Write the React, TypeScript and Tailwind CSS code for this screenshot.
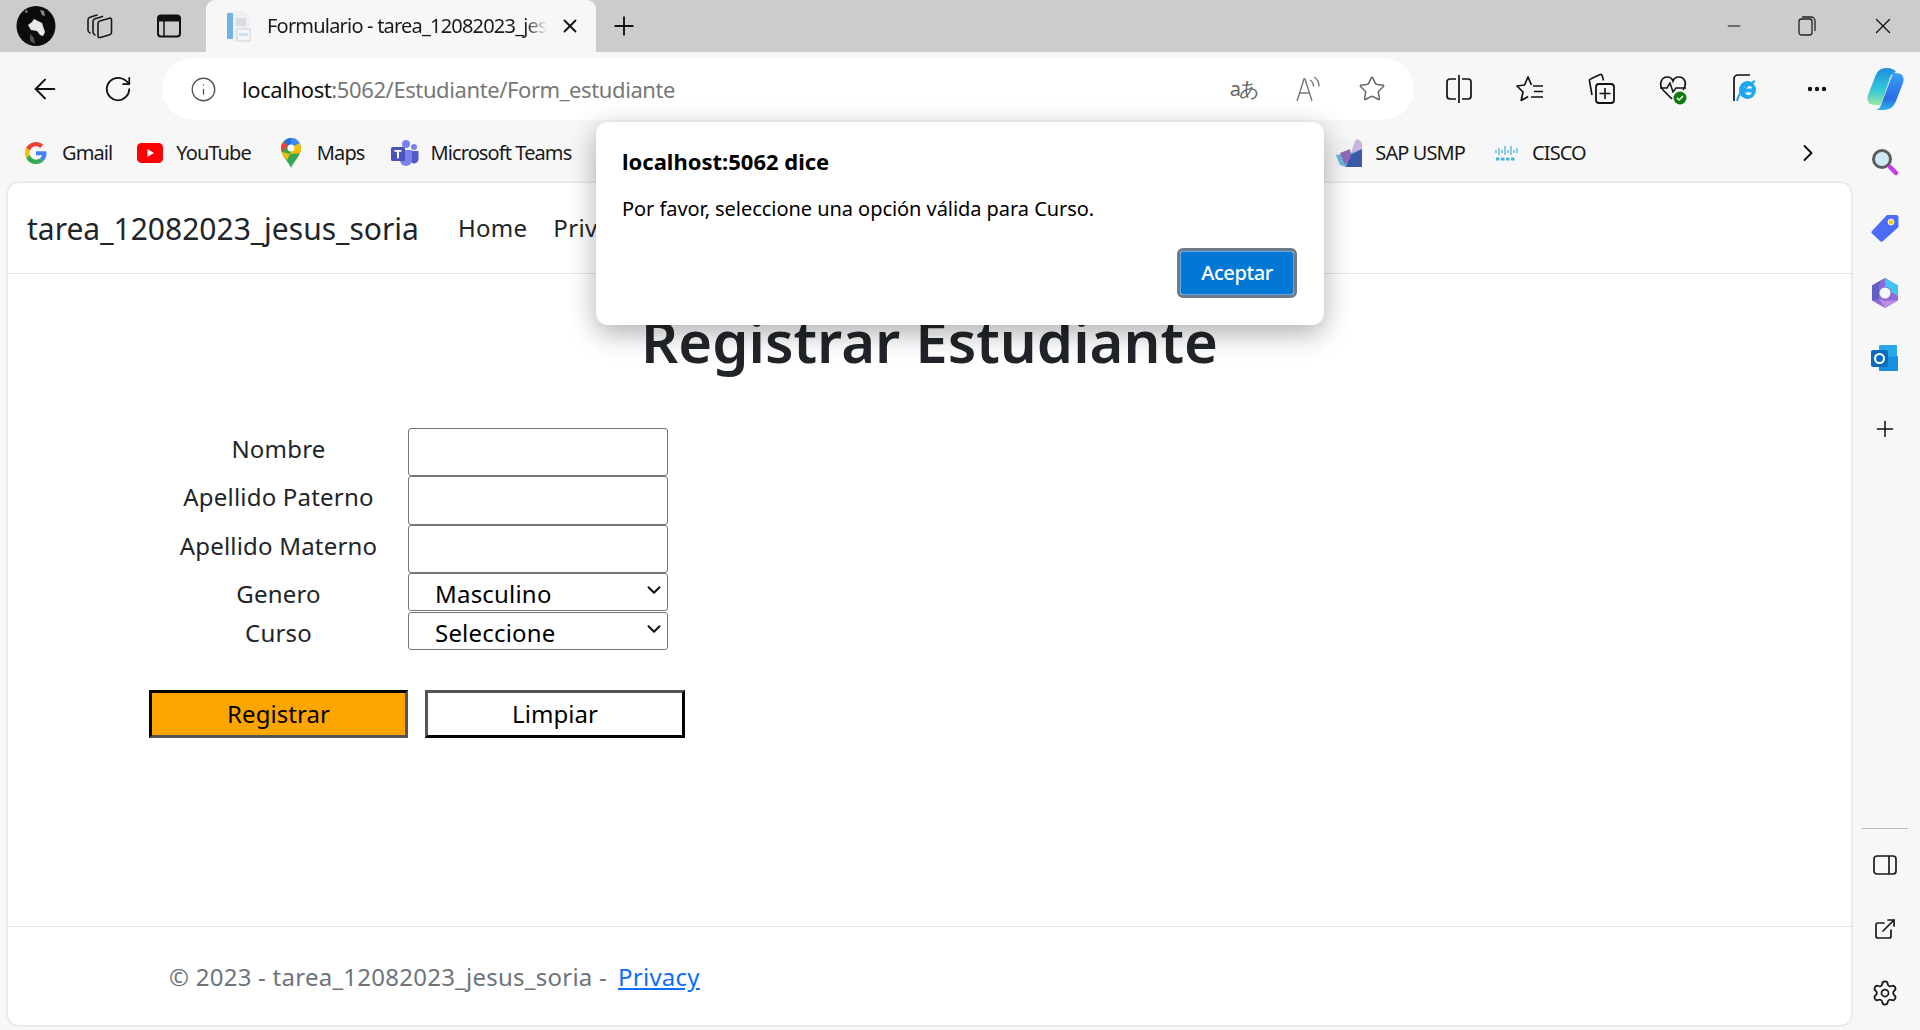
import { ArrowLeft, RotateCw, Info, Star, Plus, X, Minus, ChevronRight, ChevronDown, MoreHorizontal, Settings, ExternalLink } from "lucide-react";

const font = "font-['Noto_Sans','Open_Sans',sans-serif]";

function Avatar() {
	return (
		<svg width="40" height="40" viewBox="0 0 40 40">
			<ellipse cx="20" cy="20" rx="19.500" ry="20" fill="#0c0c0c" />
			<path d="M12 19l4-3 2-3 8 4 3 9-2 4-3-1-3-4-6-1z" fill="#e8e8e8" />
			<path d="M24 4l4 1 1 5-3-1zM10 3l2 3-3 1z" fill="#8a8a8a" />
			<path d="M14 28l4 4 1 6-5-3z" fill="#555" />
		</svg>
	);
}

function Collections() {
	return (
		<svg width="28" height="28" viewBox="0 0 28 28" fill="none" stroke="#1a1a1a" strokeWidth="1.600" strokeLinejoin="round" strokeLinecap="round">
			<path d="M4 21c-1.500-.6-2-1.500-2-3V8c0-1.500.6-2.300 2-2.800L11 3" />
			<path d="M9 23c-1.500-.6-2-1.500-2-3V9.500c0-1.500.6-2.300 2-2.800l7.500-2.300" />
			<path d="M12 11.500c0-1.300.6-2 1.800-2.400l9.500-2.900c1.300-.4 2.200.3 2.200 1.600v12.500c0 1.300-.6 2-1.800 2.400l-9.500 2.900c-1.300.4-2.200-.3-2.200-1.600z" />
		</svg>
	);
}

function TabsIcon() {
	return (
		<svg width="26" height="26" viewBox="0 0 26 26" fill="none">
			<rect x="2" y="2.500" width="22" height="21" rx="3" stroke="#111" strokeWidth="2" />
			<path d="M2 5.500a3 3 0 0 1 3-3h16a3 3 0 0 1 3 3v3H2z" fill="#111" />
			<path d="M8 8v15" stroke="#111" strokeWidth="1.500" />
		</svg>
	);
}

function PageIcon() {
	return (
		<svg width="26" height="32" viewBox="0 0 26 32">
			<path d="M3 1h15l6 6v24H3z" fill="#eef0f3" />
			<rect x="1" y="3" width="6" height="26" fill="#74b3e4" />
			<rect x="10" y="8" width="10" height="8" fill="#d9dde2" />
			<rect x="11" y="19" width="13" height="12" fill="#f5f6f8" stroke="#c9d2da" />
			<rect x="13" y="23" width="9" height="3" fill="#cfe0ee" />
		</svg>
	);
}

function GoogleIcon() {
	return (
		<svg width="22" height="22" viewBox="0 0 48 48">
			<path fill="#EA4335" d="M24 9.500c3.500 0 6.700 1.300 9.100 3.500l6.800-6.800C35.800 2.400 30.200 0 24 0 14.600 0 6.500 5.400 2.600 13.200l7.900 6.100C12.400 13.600 17.700 9.500 24 9.500z" />
			<path fill="#4285F4" d="M46.900 24.500c0-1.600-.1-3.100-.4-4.500H24v9h12.900c-.6 3-2.200 5.500-4.800 7.200l7.700 6c4.500-4.200 7.100-10.300 7.100-17.700z" />
			<path fill="#FBBC05" d="M10.500 28.700A14.500 14.500 0 0 1 9.700 24c0-1.600.3-3.200.8-4.700l-7.900-6.100A24 24 0 0 0 0 24c0 3.900.9 7.500 2.600 10.800z" />
			<path fill="#34A853" d="M24 48c6.500 0 11.900-2.100 15.900-5.800l-7.700-6c-2.200 1.400-4.900 2.300-8.200 2.300-6.300 0-11.600-4.200-13.500-9.900l-7.900 6.100C6.500 42.600 14.600 48 24 48z" />
		</svg>
	);
}

function YoutubeIcon() {
	return (
		<svg width="26" height="20" viewBox="0 0 26 20">
			<rect width="26" height="20" rx="4.500" fill="#f00" />
			<path d="M10.500 6v8l6.500-4z" fill="#fff" />
		</svg>
	);
}

function MapsIcon() {
	return (
		<svg width="20" height="30" viewBox="0 0 20 30">
			<path d="M10 30C8 24 0 18 0 10 0 4.500 4.500 0 10 0s10 4.500 10 10c0 8-8 14-10 20z" fill="#34a853" />
			<path d="M3 3.500A10 10 0 0 1 10 0v6.500a3.500 3.500 0 0 0-3 1.500z" fill="#1a73e8" />
			<path d="M10 0a10 10 0 0 1 8.500 5L13 8a3.500 3.500 0 0 0-3-1.500z" fill="#4285f4" />
			<path d="M3 3.500A10 10 0 0 0 .9 14L7 8z" fill="#ea4335" />
			<path d="M.9 14C2 17 4 19.500 6 22l7-14 5.500-3A10 10 0 0 1 20 10c0 2-.5 3.700-1.400 5.500L9 16z" fill="#fbbc04" />
			<circle cx="10" cy="10" r="3.500" fill="#fff" />
		</svg>
	);
}

function TeamsIcon() {
	return (
		<svg width="28" height="26" viewBox="0 0 28 26">
			<circle cx="23" cy="7" r="3" fill="#7b83eb" />
			<circle cx="15" cy="4" r="4" fill="#7b83eb" />
			<path d="M19 11h8.500v8a4.500 4.500 0 0 1-8.500 2z" fill="#5059c9" />
			<path d="M9 10h12v10a6 6 0 0 1-12 0z" fill="#7b83eb" />
			<rect x="0" y="7" width="14" height="14" rx="1.500" fill="#4b53bc" />
			<path d="M3.500 10h7v1.800H8v6.500H6v-6.500H3.500z" fill="#fff" />
		</svg>
	);
}

function SapIcon() {
	return (
		<svg width="26" height="28" viewBox="0 0 26 28">
			<rect width="26" height="28" fill="#f3f4f6" />
			<path d="M26 28V6L14 14 0 16l4 10 6 2z" fill="#6fb5dc" />
			<path d="M26 28V10L14 16l-4 12z" fill="#3c5aa8" />
			<path d="M15 14l4-12 3-2 4 4v6z" fill="#c7b4e0" />
			<path d="M4 14l10-4 1 8-6 8z" fill="#8f6bb8" />
		</svg>
	);
}

function CiscoIcon() {
	return (
		<svg width="26" height="28" viewBox="0 0 26 28">
			<rect width="26" height="28" fill="#f4f7f9" />
			<path d="M3 11v3M6 9v7M9 11v3M12 7v9M15 11v3M18 7v9M21 11v3M24 9v5" stroke="#4eb3d8" strokeWidth="1.300" />
			<path d="M3 20h20" stroke="#4eb3d8" strokeWidth="3" strokeDasharray="3.500 1.500" />
		</svg>
	);
}

function TranslateIcon() {
	return <span className="text-[20px] leading-none text-[#666] tracking-[-1.5px]">aあ</span>;
}

function ReadAloud() {
	return (
		<svg width="28" height="28" viewBox="0 0 28 28" fill="none" stroke="#777" strokeWidth="1.400">
			<path d="M2 26 9 4h1l7 22M5 18h10" />
			<path d="M15 5c2.500 1.500 3.500 3.500 3.500 6.500M19 2c3.500 2 5 5.500 5 9.500" />
		</svg>
	);
}

function SplitIcon() {
	return (
		<svg width="26" height="30" viewBox="0 0 26 30" fill="none" stroke="#111" strokeWidth="1.700">
			<path d="M10 5H4a3 3 0 0 0-3 3v14a3 3 0 0 0 3 3h6M16 5h6a3 3 0 0 1 3 3v14a3 3 0 0 1-3 3h-6M13 1v28" />
		</svg>
	);
}

function FavList() {
	return (
		<svg width="28" height="28" viewBox="0 0 28 28" fill="none" stroke="#111" strokeWidth="1.700" strokeLinejoin="round">
			<path d="M15.500 10 12 2 8.500 10l-7.500 1 6 6-1.800 8.500 7-4" />
			<path d="M17 11h10M18 16.500h9M15 22h12" />
		</svg>
	);
}

function AddCollection() {
	return (
		<svg width="28" height="32" viewBox="0 0 28 32" fill="none" stroke="#111" strokeWidth="1.600">
			<path d="M4 22 1.500 8c-.2-1 .2-1.800 1.200-2L12 1.500c1-.3 1.800.2 2.200 1l1.300 5" />
			<rect x="8" y="11" width="18" height="19" rx="3" strokeWidth="1.800" />
			<path d="M17 15v11M11.500 20.500h11" />
		</svg>
	);
}

function HealthIcon() {
	return (
		<svg width="30" height="32" viewBox="0 0 30 32" fill="none">
			<path d="M13 26 4 17c-5-6-1-13 4-13 3 0 5 1 6 4 1-3 4-4 6-4 5 0 9 6 4 13" stroke="#111" strokeWidth="1.700" />
			<path d="M1 15h7l3-5 3 9 3-4h10" stroke="#111" strokeWidth="1.500" />
			<circle cx="21" cy="25" r="6.500" fill="#107c10" />
			<path d="M18 25l2.200 2 3.800-4" stroke="#fff" strokeWidth="1.500" />
		</svg>
	);
}

function IeIcon() {
	return (
		<svg width="26" height="32" viewBox="0 0 26 32" fill="none">
			<path d="M2 28V6a4 4 0 0 1 4-4h12" stroke="#111" strokeWidth="1.700" />
			<ellipse cx="15.500" cy="17" rx="8.500" ry="9" fill="#1ea7ee" />
			<ellipse cx="16" cy="15.500" rx="4" ry="2.700" fill="#fff" />
			<rect x="11" y="15.500" width="12" height="2.500" fill="#1ea7ee" />
			<path d="M13 19.500h7l-2 2.500h-3z" fill="#fff" />
			<path d="M5 28c1-6 7-14 18-20" stroke="#1ea7ee" strokeWidth="2" />
		</svg>
	);
}

function CopilotIcon() {
	return (
		<svg width="40" height="44" viewBox="0 0 40 44">
			<defs>
				<linearGradient id="cp1" x1="0" y1="0" x2="0" y2="1">
					<stop offset="0" stopColor="#1b8fe0" />
					<stop offset="0.600" stopColor="#35c9d6" />
					<stop offset="1" stopColor="#9ae6a0" />
				</linearGradient>
				<linearGradient id="cp2" x1="0" y1="0" x2="0" y2="1">
					<stop offset="0" stopColor="#3aa0f2" />
					<stop offset="0.700" stopColor="#2a6ce6" />
					<stop offset="1" stopColor="#2bb5e8" />
				</linearGradient>
			</defs>
			<path d="M18 43c8 0 11-4 13-9l7-18c2-6-1-10-7-10h-3l-6 16-6 16c-1 3-2 4-5 5z" fill="url(#cp2)" />
			<path d="M22 1c-8 0-10 4-12 9L3 28c-2 6 1 10 7 10h6l8-24c1-5 3-8 7-9-2-3-5-4-9-4z" fill="url(#cp1)" />
		</svg>
	);
}

function SearchIcon() {
	return (
		<svg width="28" height="28" viewBox="0 0 28 28">
			<circle cx="11" cy="11" r="8.500" fill="#cfe8f7" stroke="#5c5c5c" strokeWidth="3" />
			<path d="M19 19l6 6" stroke="#c23ee8" strokeWidth="4.500" strokeLinecap="round" />
		</svg>
	);
}

function TagIcon() {
	return (
		<svg width="28" height="28" viewBox="0 0 28 28">
			<path d="M1 17 15 2c.6-.6 1-1 2-1h8c1.500 0 2.500 1 2.500 2.500V12c0 1-.4 1.500-1 2L12 27c-1 1-2 1-3 0L1 19.500c-.7-.7-.7-1.800 0-2.500z" fill="#4a6cf7" />
			<circle cx="20" cy="8" r="3" fill="#f4cf1f" stroke="#fff" strokeWidth="0.800" />
		</svg>
	);
}

function M365Icon() {
	return (
		<svg width="28" height="30" viewBox="0 0 28 30">
			<path d="M14 0 27 7.500v15L14 30 1 22.500v-15z" fill="#8e6ad6" />
			<path d="M14 0 27 7.500V18l-7-4c0-3-2-5-6-5z" fill="#3fc5ef" />
			<path d="M1 7.500 14 0c-4 2-6 5-6 9v12l-7 1.500z" fill="#5f5fc4" />
			<path d="M8 21l6 2 13-1-13 8z" fill="#c08ce0" />
			<circle cx="14" cy="15" r="5.500" fill="#f7f7f7" />
		</svg>
	);
}

function OutlookIcon() {
	return (
		<svg width="28" height="28" viewBox="0 0 28 28">
			<rect x="8" y="1" width="18" height="26" rx="1" fill="#28a8ea" />
			<path d="M8 14 27 12v14c0 .6-.5 1-1 1H9c-.6 0-1-.4-1-1z" fill="#1490df" />
			<rect x="0" y="6" width="17" height="17" rx="2" fill="#0f6cbd" />
			<circle cx="8.500" cy="14.500" r="4.500" fill="none" stroke="#fff" strokeWidth="2" />
		</svg>
	);
}

function SidePanel() {
	return (
		<svg width="24" height="22" viewBox="0 0 24 22" fill="none" stroke="#1a1a1a" strokeWidth="1.700">
			<rect x="1" y="2" width="22" height="18" rx="3" />
			<path d="M16 2v18" />
		</svg>
	);
}

function Bookmark({ icon, label }: { icon: React.ReactNode; label: string }) {
	return (
		<div className="flex items-center gap-[12px] text-[20px] tracking-[-0.9px] text-[#1a1a1a]">
			<div className="flex w-[28px] justify-center">{icon}</div>
			<span>{label}</span>
		</div>
	);
}

function ToolCell({ children }: { children: React.ReactNode }) {
	return <div className="flex w-[71.600px] justify-center">{children}</div>;
}

function Field({ label, height }: { label: string; height: string }) {
	return (
		<div className={`flex ${height}`}>
			<div className="w-[259px] pt-[3px] text-center text-[24px] leading-[36px] tracking-[0.2px] text-[#212529]">{label}</div>
			<input type="text" className="h-full w-[260px] rounded-[3px] border border-[#767676] bg-white" />
		</div>
	);
}

function SelectField({ label, value, options, height }: { label: string; value: string; options: string[]; height: string }) {
	return (
		<div className={`flex ${height}`}>
			<div className="w-[259px] pt-[3px] text-center text-[24px] leading-[36px] tracking-[0.2px] text-[#212529]">{label}</div>
			<div className="relative h-[38px] w-[260px]">
				<select
					defaultValue={value}
					className="h-full w-full appearance-none rounded-[3px] border border-[#767676] bg-white pl-[26px] pt-[3px] text-[24px] leading-[34px] tracking-[0.2px] text-black">
					{options.map((o) => (
						<option key={o}>{o}</option>
					))}
				</select>
				<ChevronDown size={22} strokeWidth={2.2} className="pointer-events-none absolute right-[3px] top-[6px] text-[#111]" />
			</div>
		</div>
	);
}

export default function App() {
	return (
		<div className={`relative flex h-[1030px] w-[1920px] flex-col overflow-hidden bg-[#f7f7f7] ${font}`}>
			{/* tab strip */}
			<div className="flex h-[52px] shrink-0 items-center bg-[#cccccc]">
				<div className="ml-[16px] flex w-[40px] justify-center">
					<Avatar />
				</div>
				<div className="ml-[29px] flex w-[30px] justify-center">
					<Collections />
				</div>
				<div className="ml-[39px] flex w-[30px] justify-center">
					<TabsIcon />
				</div>
				<div className="ml-[22px] flex h-full w-[390px] items-center rounded-t-[9px] bg-[#f7f7f7] pl-[20px] pr-[15px]">
					<PageIcon />
					<span className="ml-[15px] w-[280px] overflow-hidden whitespace-nowrap text-[20px] tracking-[-0.8px] text-[#1a1a1a] [mask-image:linear-gradient(90deg,#000_92%,transparent)]">
						Formulario - tarea_12082023_jesus_soria
					</span>
					<X size={22} strokeWidth={2} className="ml-[12px] text-[#111]" />
				</div>
				<Plus size={30} strokeWidth={1.5} className="ml-[13px] text-[#111]" />
				<div className="ml-auto flex items-center pr-[24px]">
					<Minus size={20} strokeWidth={1.2} className="mr-[54px] text-[#111]" />
					<svg width="18" height="20" viewBox="0 0 18 20" fill="none" stroke="#222" strokeWidth="1.300" className="mr-[54px]">
						<rect x="1" y="3" width="13" height="16" rx="2.500" />
						<path d="M4 1h9a4 4 0 0 1 4 4v10" />
					</svg>
					<X size={26} strokeWidth={1.2} className="text-[#111]" />
				</div>
			</div>

			{/* toolbar */}
			<div className="flex h-[74px] shrink-0 items-center">
				<ArrowLeft size={32} strokeWidth={1.5} className="ml-[29px] text-[#111]" />
				<RotateCw size={30} strokeWidth={1.4} className="ml-[42px] text-[#111]" />
				<div className="ml-[29px] flex h-[62px] w-[1252px] items-center rounded-full bg-white shadow-[0_0_1px_rgba(0,0,0,0.05)]">
					<Info size={27} strokeWidth={1.2} className="ml-[28px] text-[#555]" />
					<div className="ml-[25px] text-[22px] tracking-[-0.4px] text-[#777]">
						<span className="text-[#111]">localhost</span>:5062/Estudiante/Form_estudiante
					</div>
					<div className="ml-auto flex items-center">
						<TranslateIcon />
						<div className="ml-[37px]">
							<ReadAloud />
						</div>
						<Star size={28} strokeWidth={1.3} className="ml-[35px] mr-[28px] text-[#666]" />
					</div>
				</div>
				<div className="ml-[9px] flex items-center">
					<ToolCell>
						<SplitIcon />
					</ToolCell>
					<ToolCell>
						<FavList />
					</ToolCell>
					<ToolCell>
						<AddCollection />
					</ToolCell>
					<ToolCell>
						<HealthIcon />
					</ToolCell>
					<ToolCell>
						<IeIcon />
					</ToolCell>
					<ToolCell>
						<MoreHorizontal size={24} strokeWidth={2.4} className="text-[#111]" />
					</ToolCell>
					<div className="ml-[12px]">
						<CopilotIcon />
					</div>
				</div>
			</div>

			{/* bookmarks + page + side rail */}
			<div className="flex min-h-0 flex-1">
				<div className="flex min-w-0 flex-1 flex-col">
					<div className="flex h-[57px] shrink-0 items-center pb-[4px] pl-[22px]">
						<Bookmark icon={<GoogleIcon />} label="Gmail" />
						<div className="ml-[24px]">
							<Bookmark icon={<YoutubeIcon />} label="YouTube" />
						</div>
						<div className="ml-[26px]">
							<Bookmark icon={<MapsIcon />} label="Maps" />
						</div>
						<div className="ml-[26px]">
							<Bookmark icon={<TeamsIcon />} label="Microsoft Teams" />
						</div>
						<div className="ml-[764px]">
							<Bookmark icon={<SapIcon />} label="SAP USMP" />
						</div>
						<div className="ml-[27px]">
							<Bookmark icon={<CiscoIcon />} label="CISCO" />
						</div>
						<ChevronRight size={28} strokeWidth={1.6} className="ml-auto mr-[29px] text-[#111]" />
					</div>

					<div className="mb-[5px] ml-[8px] flex min-h-0 flex-1 flex-col rounded-[10px] bg-white shadow-[0_0_3px_rgba(0,0,0,0.2)]">
						<div className="flex h-[91px] shrink-0 items-center border-b border-[#e3e3e3] pl-[19px] text-[#212529]">
							<span className="text-[30px]">tarea_12082023_jesus_soria</span>
							<span className="ml-[39px] text-[24px] tracking-[0.3px]">Home</span>
							<span className="ml-[26px] text-[24px] tracking-[0.3px]">Privacy</span>
						</div>

						<div className="flex min-h-0 flex-1 flex-col">
							<h1 className="mt-[25px] text-center text-[58px] font-semibold leading-[84px] text-[#212529]">
								Registrar Estudiante
							</h1>
							<div className="ml-[141px] mt-[45px] flex flex-col">
								<Field label="Nombre" height="h-[48px]" />
								<Field label="Apellido Paterno" height="h-[49px]" />
								<Field label="Apellido Materno" height="h-[48px]" />
								<SelectField label="Genero" value="Masculino" options={["Masculino", "Femenino"]} height="h-[39px]" />
								<SelectField label="Curso" value="Seleccione" options={["Seleccione", "Matemática"]} height="h-[39px]" />
								<div className="mt-[39px] flex gap-[17px]">
									<button className="h-[48px] w-[259px] border-[3px] border-t-black border-l-black border-r-[#555] border-b-[#555] bg-[#ffa500] text-[24px] tracking-[0.05px] text-black">
										Registrar
									</button>
									<button className="h-[48px] w-[260px] border-[3px] border-t-[#555] border-l-[#555] border-r-black border-b-black bg-white text-[24px] tracking-[0.05px] text-black">
										Limpiar
									</button>
								</div>
							</div>
						</div>

						<div className="flex h-[99px] shrink-0 items-center border-t border-[#e3e3e3] pl-[161px] pt-[2px] text-[24px] tracking-[0.25px] text-[#6c757d]">
							<span>© 2023 - tarea_12082023_jesus_soria - </span>
							<a href="#" className="ml-[11px] text-[#0d6efd] underline">
								Privacy
							</a>
						</div>
					</div>
				</div>

				{/* side rail */}
				<div className="flex w-[69px] shrink-0 flex-col items-center pb-[8px] pr-[2px]">
					<div className="mt-[22px]">
						<SearchIcon />
					</div>
					<div className="mt-[38px]">
						<TagIcon />
					</div>
					<div className="mt-[36px]">
						<M365Icon />
					</div>
					<div className="mt-[36px]">
						<OutlookIcon />
					</div>
					<Plus size={26} strokeWidth={1.4} className="mt-[44px] text-[#111]" />
					<div className="mt-auto h-[1px] w-[46px] bg-[#bbb]" />
					<div className="mt-[25px]">
						<SidePanel />
					</div>
					<ExternalLink size={24} strokeWidth={1.7} className="mt-[41px] text-[#1a1a1a]" />
					<Settings size={28} strokeWidth={1.5} className="mb-[15px] mt-[38px] text-[#1a1a1a]" />
				</div>
			</div>

			{/* js alert dialog */}
			<div className="absolute left-[596px] top-[122px] flex h-[203px] w-[728px] flex-col rounded-[12px] bg-white px-[26px] pt-[23px] shadow-[0_8px_28px_rgba(0,0,0,0.32)]">
				<div className="text-[22px] font-bold leading-[32px] text-black">localhost:5062 dice</div>
				<div className="mt-[17px] text-[20px] leading-[30px] tracking-[-0.05px] text-black">
					Por favor, seleccione una opción válida para Curso.
				</div>
				<div className="mt-auto mb-[30px] mr-[4px] flex justify-end">
					<button className="h-[44px] w-[114px] rounded-[3px] border border-[#5ea6e8] bg-[#0078d4] text-[20px] font-medium tracking-[-0.4px] text-white outline-[3px] outline-[#6f7a87]">
						Aceptar
					</button>
				</div>
			</div>
		</div>
	);
}
